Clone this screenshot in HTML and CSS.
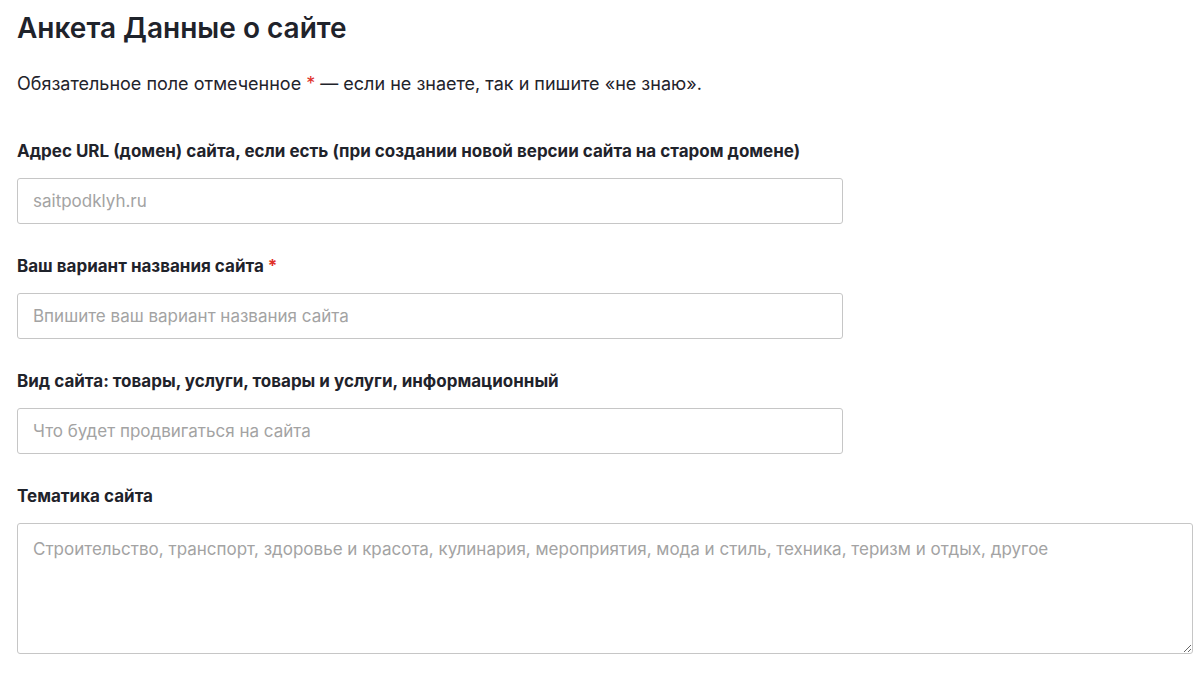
FILE: index.html
```html
<!DOCTYPE html>
<html lang="ru">
<head>
  <meta charset="utf-8">
  <title>Анкета Данные о сайте</title>
  <link rel="stylesheet" href="styles.css">
</head>
<body>
<div class="form-wrap">
  <h1 class="form-title">Анкета Данные о сайте</h1>
  <p class="form-note">Обязательное поле отмеченное <span class="req">*</span> — если не знаете, так и пишите «не знаю».</p>

  <form class="form">
    <div class="field">
      <label class="field-label" for="url">Адрес URL (домен) сайта, если есть (при создании новой версии сайта на старом домене)</label>
      <input class="field-input" id="url" type="text" placeholder="saitpodklyh.ru">
    </div>

    <div class="field">
      <label class="field-label" for="name">Ваш вариант названия сайта <span class="req">*</span></label>
      <input class="field-input" id="name" type="text" placeholder="Впишите ваш вариант названия сайта">
    </div>

    <div class="field">
      <label class="field-label" for="kind">Вид сайта: товары, услуги, товары и услуги, информационный</label>
      <input class="field-input" id="kind" type="text" placeholder="Что будет продвигаться на сайта">
    </div>

    <div class="field">
      <label class="field-label" for="topic">Тематика сайта</label>
      <textarea class="field-input field-area" id="topic" placeholder="Строительство, транспорт, здоровье и красота, кулинария, мероприятия, мода и стиль, техника, теризм и отдых, другое"></textarea>
    </div>
  </form>
</div>
</body>
</html>
```

FILE: styles.css
```css
body {
  margin: 0;
  background: #fff;
  font-family: Inter, "Noto Sans", sans-serif;
  color: #1f232b;
}

.form-wrap {
  padding: 10px 7px 0 17px;
}

.form-title {
  margin: 0;
  font-size: 28px;
  line-height: 36px;
  font-weight: 600;
}

.form-note {
  margin: 26px 0 0;
  font-size: 18px;
  line-height: 24px;
}

.req {
  color: #e0302a;
}

.form {
  margin-top: 43px;
}

.field {
  margin-bottom: 30px;
}

.field-label {
  display: block;
  margin-bottom: 15px;
  font-size: 17px;
  line-height: 24px;
  font-weight: 700;
}

.field-input {
  display: block;
  box-sizing: border-box;
  width: 826px;
  height: 46px;
  padding: 0 15px;
  border: 1px solid #c6c6c6;
  border-radius: 3px;
  font-family: inherit;
  font-size: 17px;
  color: #1f232b;
  background: #fff;
}

.field-input::placeholder {
  color: #a3a3a3;
}

.field-area {
  width: 1176px;
  height: 131px;
  padding: 13px 15px;
  line-height: 24px;
  resize: vertical;
}
```
